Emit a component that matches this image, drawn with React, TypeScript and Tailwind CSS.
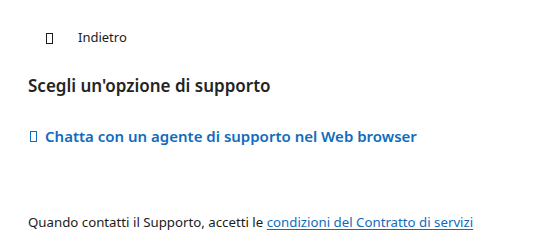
import React from 'react';

const Tofu: React.FC<{ className?: string }> = ({ className }) => (
  <span className={`inline-block w-[7px] h-[11px] border ${className ?? ''}`} />
);

export default function App() {
  return (
    <div
      className="w-[534px] h-[241px] bg-white text-[#1b1b1b] overflow-hidden"
      style={{ fontFamily: '"Segoe UI", "Noto Sans", sans-serif' }}
    >
      <div className="pl-[28px] pt-[28px]">
        {/* Back */}
        <button className="flex items-center h-[20px] pl-[18px] text-[13px] text-[#1b1b1b]">
          <Tofu className="border-[#1b1b1b]" />
          <span className="ml-[25px]">Indietro</span>
        </button>

        {/* Heading */}
        <h2 className="mt-[26px] text-[17px] font-semibold leading-[24px] text-[#242424]">
          Scegli un'opzione di supporto
        </h2>

        {/* Chat option */}
        <a href="#" className="mt-[27px] flex items-center gap-[9px] text-[15px] font-semibold leading-[22px] text-[#0f6cbd]">
          <Tofu className="border-[#0f6cbd] ml-[2px]" />
          <span className="-ml-[1px]">Chatta con un agente di supporto nel Web browser</span>
        </a>

        {/* Footer */}
        <p className="mt-[65px] text-[13.25px] leading-[20px] text-[#1b1b1b]">
          Quando contatti il Supporto, accetti le{' '}
          <a href="#" className="text-[#0f6cbd] underline underline-offset-2">
            condizioni del Contratto di servizi
          </a>
        </p>
      </div>
    </div>
  );
}
